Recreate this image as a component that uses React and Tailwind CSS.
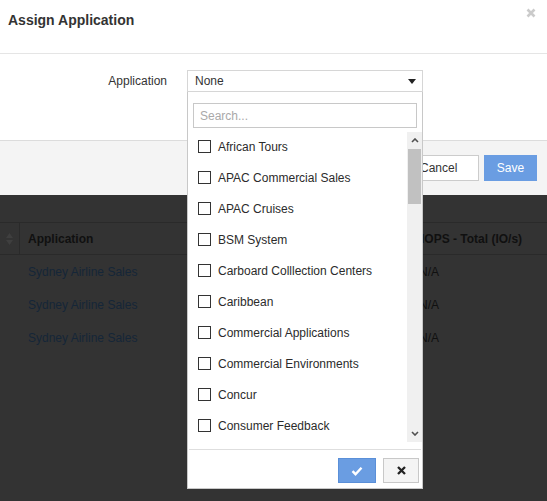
import { useState } from 'react'

const APPS = [
  'African Tours',
  'APAC Commercial Sales',
  'APAC Cruises',
  'BSM System',
  'Carboard Colllection Centers',
  'Caribbean',
  'Commercial Applications',
  'Commercial Environments',
  'Concur',
  'Consumer Feedback',
]

const ROWS = ['Sydney Airline Sales', 'Sydney Airline Sales', 'Sydney Airline Sales']

function Caret({ up }) {
  return (
    <svg width="8" height="5" viewBox="0 0 8 5" className={up ? 'rotate-180' : ''}>
      <path d="M1 1l3 3 3-3" fill="none" stroke="#505050" strokeWidth="1.6" />
    </svg>
  )
}

function Scrollbar() {
  return (
    <div className="w-[15px] bg-[#f0f0f0] flex flex-col">
      <div className="h-[17px] flex items-center justify-center"><Caret up /></div>
      <div className="h-[55px] bg-[#c1c1c1] mx-[1px]" />
      <div className="flex-1" />
      <div className="h-[17px] flex items-center justify-center"><Caret /></div>
    </div>
  )
}

function AppPicker() {
  const [checked, setChecked] = useState({})
  return (
    <div className="absolute left-0 top-full w-[236px] bg-white border border-[#c8c8c8] border-t-0 z-10">
      <div className="px-[5px] pt-[11px] pb-[4px]">
        <input
          placeholder="Search..."
          className="w-full h-[25px] border border-[#c8c8c8] px-[6px] text-[12px] text-[#333] placeholder:text-[#a9a9a9] outline-none"
        />
      </div>
      <div className="flex h-[310px]">
        <ul className="flex-1 -mt-[1px]">
          {APPS.map((a) => (
            <li
              key={a}
              className="h-[31px] flex items-center pl-[10px] gap-[7px] text-[12px] text-[#2b2b2b] cursor-pointer"
              onClick={() => setChecked((c) => ({ ...c, [a]: !c[a] }))}
            >
              <span className="w-[13px] h-[13px] border border-[#333] bg-white shrink-0" />
              {a}
            </li>
          ))}
        </ul>
        <Scrollbar />
      </div>
      <div className="mx-[1px] mt-[7px] border-t border-[#dedede] pt-[8px] pb-[5px] pr-[2px] flex justify-end gap-[7px]">
        <button className="w-[38px] h-[25px] bg-[#6a9de2] border border-[#5a8fd8] flex items-center justify-center">
          <svg width="12" height="10" viewBox="0 0 12 10">
            <path d="M1.5 5.2l3 3 6-6.5" fill="none" stroke="#fff" strokeWidth="2.4" />
          </svg>
        </button>
        <button className="w-[36px] h-[25px] bg-[#f4f4f4] border border-[#c8c8c8] flex items-center justify-center">
          <svg width="9" height="9" viewBox="0 0 9 9">
            <path d="M1 1l7 7M8 1l-7 7" stroke="#222" strokeWidth="2.3" />
          </svg>
        </button>
      </div>
    </div>
  )
}

export default function App() {
  return (
    <div className="h-[501px] w-[547px] overflow-hidden bg-[#333] font-['Liberation_Sans',Arial,sans-serif] text-[12px]">
      <div className="bg-white">
        <div className="h-[54px] border-b border-[#e5e5e5] flex items-start justify-between pl-[8px] pr-[10px]">
          <h4 className="mt-[10px] text-[14px] font-bold text-[#333]">Assign Application</h4>
          <svg width="10" height="10" viewBox="0 0 10 10" className="mt-[8px] mr-[1px]">
            <path d="M1.5 1.5l7 7M8.5 1.5l-7 7" stroke="#cbcbcb" strokeWidth="2.6" />
          </svg>
        </div>
        <div className="h-[86px] pt-[16px]">
          <div className="flex items-center">
            <label className="w-[167px] text-right text-[#333]">Application</label>
            <div className="relative ml-[20px] w-[236px]">
              <div className="h-[22px] border border-[#d6d6d6] flex items-center justify-between pl-[7px] pr-[6px] text-[#333]">
                <span>None</span>
                <svg width="8" height="5" viewBox="0 0 8 5"><path d="M0 0h8L4 5z" fill="#222" /></svg>
              </div>
              <AppPicker />
            </div>
          </div>
        </div>
        <div className="h-[55px] bg-[#f4f4f4] border-t border-[#dcdcdc] flex items-center justify-end gap-[5px] pr-[10px]">
          <button className="h-[26px] w-[95px] bg-white border border-[#cccccc] text-[#333] pl-[35px] text-left">Cancel</button>
          <button className="h-[26px] w-[53px] bg-[#6a9de2] text-white">Save</button>
        </div>
      </div>
      <div className="pt-[27px]">
        <div className="h-[33px] border-y border-[#2a2a2a] flex items-center">
          <div className="w-[20px] h-full border-r border-[#2a2a2a] flex flex-col items-center justify-center">
            <svg width="7" height="12" viewBox="0 0 7 12">
              <path d="M0 5L3.5 0 7 5zM0 7l3.5 5L7 7z" fill="#3f3f3f" />
            </svg>
          </div>
          <div className="w-[401px] pl-[8px] font-bold text-[#101010]">Application</div>
          <div className="font-bold text-[#101010]">IOPS - Total (IO/s)</div>
        </div>
        {ROWS.map((r, i) => (
          <div key={i} className="h-[33px] flex items-center">
            <div className="w-[421px] pl-[28px] text-[#152638]">{r}</div>
            <div className="text-[#101010] -ml-[2px]">N/A</div>
          </div>
        ))}
      </div>
    </div>
  )
}
